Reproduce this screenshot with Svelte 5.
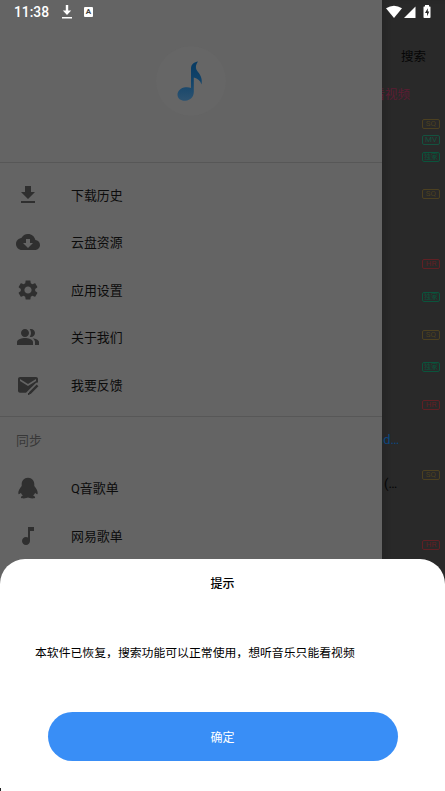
<script lang="ts">
	const menu = [
		{ icon: 'download', label: '下载历史' },
		{ icon: 'cloud', label: '云盘资源' },
		{ icon: 'settings', label: '应用设置' },
		{ icon: 'people', label: '关于我们' },
		{ icon: 'feedback', label: '我要反馈' }
	];

	const sync = [
		{ icon: 'qq', label: 'Q音歌单' },
		{ icon: 'note', label: '网易歌单' }
	];

	// an empty tag keeps its line in the column
	const songs = [
		{ tags: ['SQ', 'MV', '独家'] },
		{ tags: ['SQ'] },
		{ tags: ['HR', '', '独家'] },
		{ tags: ['SQ', '', '独家'] },
		{ tags: ['HR'], link: 'nd…' },
		{ tags: ['SQ'], title: '(…' },
		{ tags: ['HR'] }
	];

	const kinds: Record<string, string> = { SQ: 'sq', MV: 'mv', 独家: 'only', HR: 'hires' };

	const paths: Record<string, string> = {
		download: 'M19 9h-4V3H9v6H5l7 7 7-7zM5 18v2h14v-2H5z',
		cloud: 'M19.35 10.04C18.67 6.59 15.64 4 12 4 9.11 4 6.6 5.64 5.35 8.04 2.34 8.36 0 10.91 0 14c0 3.31 2.69 6 6 6h13c2.76 0 5-2.24 5-5 0-2.64-2.05-4.78-4.65-4.96zM17 13l-5 5-5-5h3V9h4v4h3z',
		settings: 'M19.14 12.94c.04-.3.06-.61.06-.94 0-.32-.02-.64-.07-.94l2.03-1.58c.18-.14.23-.41.12-.61l-1.92-3.32c-.12-.22-.37-.29-.59-.22l-2.39.96c-.5-.38-1.03-.7-1.62-.94l-.36-2.54c-.04-.24-.24-.41-.48-.41h-3.84c-.24 0-.43.17-.47.41l-.36 2.54c-.59.24-1.13.57-1.62.94l-2.39-.96c-.22-.08-.47 0-.59.22L2.74 8.87c-.12.21-.08.47.12.61l2.03 1.58c-.05.3-.09.63-.09.94s.02.64.07.94l-2.03 1.58c-.18.14-.23.41-.12.61l1.92 3.32c.12.22.37.29.59.22l2.39-.96c.5.38 1.03.7 1.62.94l.36 2.54c.05.24.24.41.48.41h3.84c.24 0 .44-.17.47-.41l.36-2.54c.59-.24 1.13-.56 1.62-.94l2.39.96c.22.08.47 0 .59-.22l1.92-3.32c.12-.22.07-.47-.12-.61l-2.01-1.58zM12 15.6c-1.98 0-3.6-1.62-3.6-3.6s1.62-3.6 3.6-3.6 3.6 1.62 3.6 3.6-1.62 3.6-3.6 3.6z',
		people: 'M16.67 13.13C18.04 14.06 19 15.32 19 17v3h4v-3c0-2.18-3.57-3.47-6.33-3.87zM15 12c2.21 0 4-1.79 4-4s-1.79-4-4-4c-.47 0-.91.1-1.33.24C14.5 5.27 15 6.58 15 8s-.5 2.73-1.33 3.76c.42.14.86.24 1.33.24zM9 12c2.21 0 4-1.79 4-4s-1.79-4-4-4-4 1.79-4 4 1.79 4 4 4zM9 13c-2.67 0-8 1.34-8 4v3h16v-3c0-2.66-5.33-4-8-4z',
		feedback: 'M4 4h16c1.1 0 2 .9 2 2v3.6c-1.1-.2-2 .2-2.7.9L10 19.8H4c-1.1 0-2-.9-2-2V6c0-1.1.9-2 2-2zm0 2v2l8 5 8-5V6l-8 5zM20.7 11.6l1.7 1.7-7.7 7.7H13v-1.7zM12 20h1.5v2H12z',
		qq: 'M12 1.8c-4 0-6.3 3-6.3 6.6v1.500C3.800 12.100 2.300 14.700 2.300 17c0 1.600.9 1.700 2.500-.2.4 1.200 1.200 2 2.100 2.800-1.500.5-2 1.200-2 1.900 0 1.300 5.500 1.100 7.100.1 1.600 1 7.100 1.200 7.100-.1 0-.7-.5-1.400-2-1.900.9-.8 1.700-1.600 2.100-2.800 1.600 1.900 2.500 1.800 2.500.2 0-2.300-1.500-4.900-3.400-7.100V8.400c0-3.600-2.300-6.600-6.300-6.600z',
		note: 'M12 3v10.550c-.590-.340-1.270-.550-2-.550-2.210 0-4 1.790-4 4s1.790 4 4 4 4-1.790 4-4V7h4V3h-6z'
	};

	let open = $state(true);
</script>

{#snippet row(item: { icon: string; label: string })}
	<li class="item">
		<svg viewBox="0 0 24 24" width="24" height="24"><path d={paths[item.icon]} /></svg>
		<span>{item.label}</span>
	</li>
{/snippet}

<div class="screen">
	<aside class="drawer">
		<header>
			<div class="logo">
				<svg viewBox="0 0 70 70" width="70" height="70">
					<defs>
						<linearGradient id="tone" x1="0" y1="0" x2="0" y2="1">
							<stop offset="0" stop-color="#073a62" />
							<stop offset="0.5" stop-color="#12446a" />
							<stop offset="1" stop-color="#2d5371" />
						</linearGradient>
					</defs>
					<path
						fill="url(#tone)"
						d="M42 15.500c-3.500.5-7 2.500-7 7v19.500c-1.500-.8-3.500-1-5.500-.8-4.500.5-8 3.500-8 7.500s3.500 6.300 8 6c5-.5 8.300-4 8.300-9V31.500c4 1 6.500 3 7.700 7 1-5-.5-9-3.500-12.500-2.500-3-3-6.500 0-10.500z"
					/>
				</svg>
			</div>
		</header>
		<ul class="list">
			{#each menu as item}
				{@render row(item)}
			{/each}
		</ul>
		<h2>同步</h2>
		<ul>
			{#each sync as item}
				{@render row(item)}
			{/each}
		</ul>
	</aside>

	<main class="page">
		<div class="search">搜索</div>
		<div class="tab"><span>看视频</span></div>
		{#each songs as song}
			<div class="song">
				<div class="text">
					{#if song.link}<span class="link">{song.link}</span>{/if}
					{#if song.title}<span class="title">{song.title}</span>{/if}
				</div>
				<div class="tags">
					{#each song.tags as tag}
						<span class="tag {kinds[tag] ?? 'none'}">{tag}</span>
					{/each}
				</div>
			</div>
		{/each}
	</main>

	<div class="status">
		<span class="clock">11:38</span>
		<svg class="down" viewBox="0 0 12 14" width="12" height="14">
			<path d="M4.800 0h2.400v5.500h3L6 10 1.800 5.500h3zM1 12h10v1.400H1z" />
		</svg>
		<div class="lang">A</div>
		<svg class="signal" viewBox="0 0 46 14" width="46" height="14">
			<path d="M0 3.200Q8 -1.800 16 3.200L8 13z" />
			<path d="M29.500 1.500V13H18z" />
			<path d="M39 0h4v1.500h1q.500 0 .500.700v10q0 .800-.800.800h-5.400q-.800 0-.800-.800v-10q0-.7.500-.7H39z" />
			<path class="bolt" d="M41.800 3.200L39 8h2v3.200L43.300 6.500h-1.500z" />
		</svg>
	</div>

	{#if open}
		<section class="sheet">
			<h1>提示</h1>
			<p>本软件已恢复，搜索功能可以正常使用，想听音乐只能看视频</p>
			<button onclick={() => (open = false)}>确定</button>
			<i class="speck"></i>
		</section>
	{/if}
</div>

<style>
	:global(body) {
		font-family: Roboto, 'Noto Sans CJK SC', sans-serif;
		background: #292929;
	}

	.screen {
		position: relative;
		display: grid;
		grid-template-columns: 382px 1fr;
		height: 791px;
		overflow: hidden;
	}

	ul {
		list-style: none;
		margin: 0;
		padding: 0;
	}

	.drawer {
		background: #646464;
		color: #0c0c0c;
		overflow: hidden;
	}

	header {
		display: flex;
		justify-content: center;
		box-sizing: border-box;
		height: 163px;
		padding-top: 46px;
		border-bottom: 1px solid #575757;
	}

	.logo {
		width: 70px;
		height: 70px;
		border-radius: 50%;
		background: #666;
	}

	.logo svg {
		display: block;
	}

	.list {
		padding: 8px 0 7px;
		border-bottom: 1px solid #575757;
	}

	.item {
		display: flex;
		align-items: center;
		height: 47.5px;
		padding-left: 16px;
		gap: 31px;
		font-size: 12.9px;
	}

	.item svg {
		fill: #2f2f2f;
	}

	.item span {
		padding-bottom: 1px;
	}

	h2 {
		margin: 0;
		padding-left: 16px;
		font-size: 12.9px;
		font-weight: 400;
		line-height: 48px;
		color: #383838;
	}

	.page {
		overflow: hidden;
		box-shadow: inset 5px 0 6px -4px #222;
	}

	.search {
		padding-left: 19px;
		line-height: 20px;
		margin-top: 47px;
		font-size: 12.5px;
		color: #060606;
	}

	.tab {
		display: flex;
		justify-content: flex-end;
		width: 28px;
		margin-top: 18px;
		height: 34px;
		line-height: 20px;
		font-size: 12.5px;
		white-space: nowrap;
		color: #5c1c33;
	}

	.song {
		display: flex;
		justify-content: space-between;
		height: 70.2px;
		padding-right: 5px;
	}

	.text {
		width: 20px;
		font-size: 13px;
		line-height: 20px;
		white-space: nowrap;
	}

	.link,
	.title {
		display: block;
		margin: 30px 0 0 -6px;
		color: #0b4780;
	}

	.title {
		margin: 4px 0 0 2px;
		color: #050505;
	}

	.tags {
		display: flex;
		flex-direction: column;
		gap: 6.3px;
	}

	.tag {
		box-sizing: border-box;
		width: 18px;
		height: 10px;
		border: 1px solid;
		border-radius: 2px;
		font-size: 8px;
		line-height: 8px;
		text-align: center;
	}

	.sq {
		color: #4c4020;
	}

	.mv {
		color: #14523f;
	}

	.only {
		color: #0a543c;
		font-size: 7px;
		white-space: nowrap;
	}

	.hires {
		color: #602024;
	}

	.none {
		visibility: hidden;
	}

	/* system bar lies over both the drawer and the page */
	.status {
		position: absolute;
		inset: 0 0 auto;
		display: flex;
		align-items: center;
		height: 24px;
		padding: 0 13px 0 14px;
		color: #fff;
		fill: #fff;
	}

	.clock {
		width: 35px;
		font-size: 13.8px;
		font-weight: 500;
		white-space: nowrap;
	}

	.down {
		margin-left: 12px;
	}

	.lang {
		width: 9px;
		height: 10px;
		margin-left: 11px;
		border-radius: 1px;
		background: #fff;
		color: #444;
		font-size: 8px;
		font-weight: 700;
		line-height: 10px;
		text-align: center;
	}

	.signal {
		margin-left: auto;
	}

	.bolt {
		fill: #292929;
	}

	.sheet {
		position: absolute;
		inset: auto 0 0;
		display: flex;
		flex-direction: column;
		box-sizing: border-box;
		height: 232px;
		border-radius: 25px 25px 0 0;
		background: #fff;
		color: #000;
	}

	h1 {
		margin: 15px 0 0;
		font-size: 12px;
		font-weight: 500;
		line-height: 20px;
		text-align: center;
	}

	p {
		margin: 49px 35px 0;
		font-size: 11.85px;
		line-height: 20px;
		white-space: nowrap;
	}

	button {
		width: 350px;
		height: 49px;
		margin: 49px auto 0;
		padding: 0;
		border: 0;
		border-radius: 25px;
		background: #398ef6;
		color: #fff;
		font: inherit;
		font-size: 12px;
	}

	.speck {
		position: absolute;
		left: 0;
		bottom: 0;
		width: 1px;
		height: 3px;
		background: #222;
	}
</style>
